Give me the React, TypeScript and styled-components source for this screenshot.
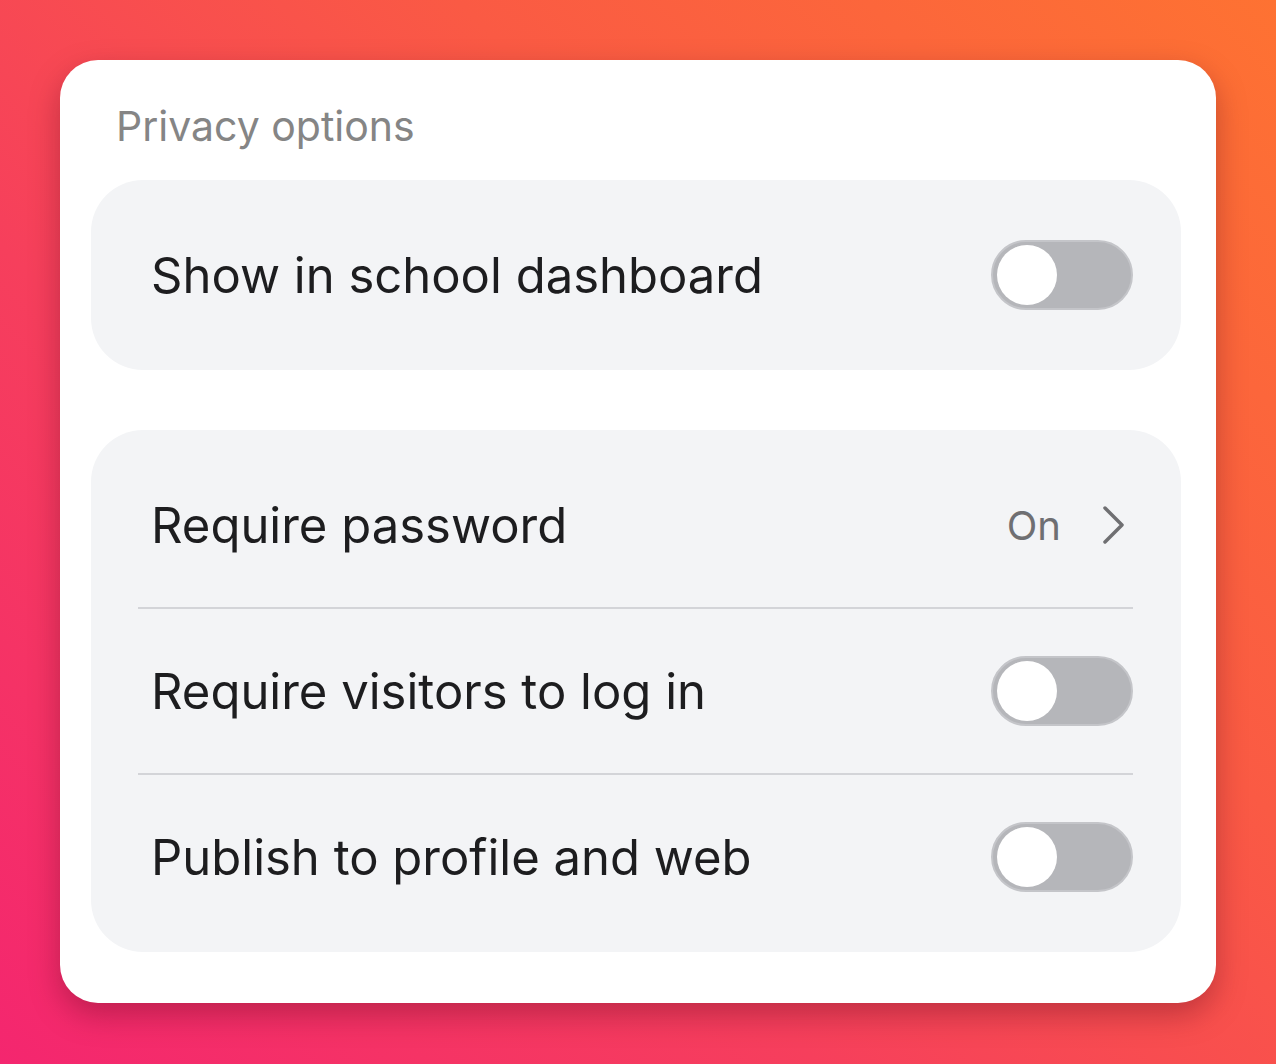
import React from "react";
import styled, { createGlobalStyle } from "styled-components";

const Global = createGlobalStyle`
  html, body { margin: 0; padding: 0; }
  body {
    width: 1276px;
    height: 1064px;
    overflow: hidden;
    font-family: Inter, "Noto Sans", sans-serif;
    background: linear-gradient(225deg, #fe7232 0%, #fa5a44 35%, #f63f5c 65%, #f4266f 100%);
  }
`;

const Page = styled.div`
  padding: 60px 60px 0 60px;
`;

const Card = styled.div`
  width: 1156px;
  height: 943px;
  box-sizing: border-box;
  background: #fff;
  border-radius: 38px;
  box-shadow: 0 12px 30px rgba(90, 10, 30, 0.35);
  padding: 36px 35px 0 31px;
  display: flex;
  flex-direction: column;
`;

const Title = styled.div`
  font-size: 41px;
  color: #858585;
  padding-left: 25px;
  height: 84px;
  line-height: 60px;
`;

const Group = styled.div<{ $mt?: number }>`
  background: #f3f4f6;
  border-radius: 52px;
  padding: 13px 48px 13px 47px;
  margin-top: ${(p) => p.$mt ?? 0}px;
  display: flex;
  flex-direction: column;
`;

const Row = styled.div`
  height: 164px;
  display: flex;
  align-items: center;
  justify-content: space-between;
  padding-left: 13px;
`;

const Divider = styled.div`
  height: 2px;
  background: #d3d4d8;
`;

const Label = styled.div`
  font-size: 49px;
  color: #1d1d1f;
`;

const Track = styled.div`
  width: 142px;
  height: 70px;
  box-sizing: border-box;
  border-radius: 35px;
  background: #b5b6ba;
  border: 2px solid #c4c5c9;
  display: flex;
  align-items: center;
  padding-left: 4px;
`;

const Knob = styled.div`
  width: 60px;
  height: 60px;
  border-radius: 50%;
  background: #fff;
`;

const Value = styled.div`
  display: flex;
  align-items: center;
  gap: 40px;
  padding-right: 8px;
  font-size: 40px;
  color: #6f6f72;
`;

const Toggle = () => (
  <Track>
    <Knob />
  </Track>
);

export default function App() {
  return (
    <>
      <Global />
      <Page>
        <Card>
          <Title>Privacy options</Title>
          <Group>
            <Row>
              <Label>Show in school dashboard</Label>
              <Toggle />
            </Row>
          </Group>
          <Group $mt={60}>
            <Row>
              <Label>Require password</Label>
              <Value>
                On
                <svg width="24" height="40" viewBox="0 0 24 40" fill="none">
                  <path d="M4 3 L21 20 L4 37" stroke="#6f6f72" strokeWidth="3.5" strokeLinecap="round" strokeLinejoin="round" />
                </svg>
              </Value>
            </Row>
            <Divider />
            <Row>
              <Label>Require visitors to log in</Label>
              <Toggle />
            </Row>
            <Divider />
            <Row>
              <Label>Publish to profile and web</Label>
              <Toggle />
            </Row>
          </Group>
        </Card>
      </Page>
    </>
  );
}
